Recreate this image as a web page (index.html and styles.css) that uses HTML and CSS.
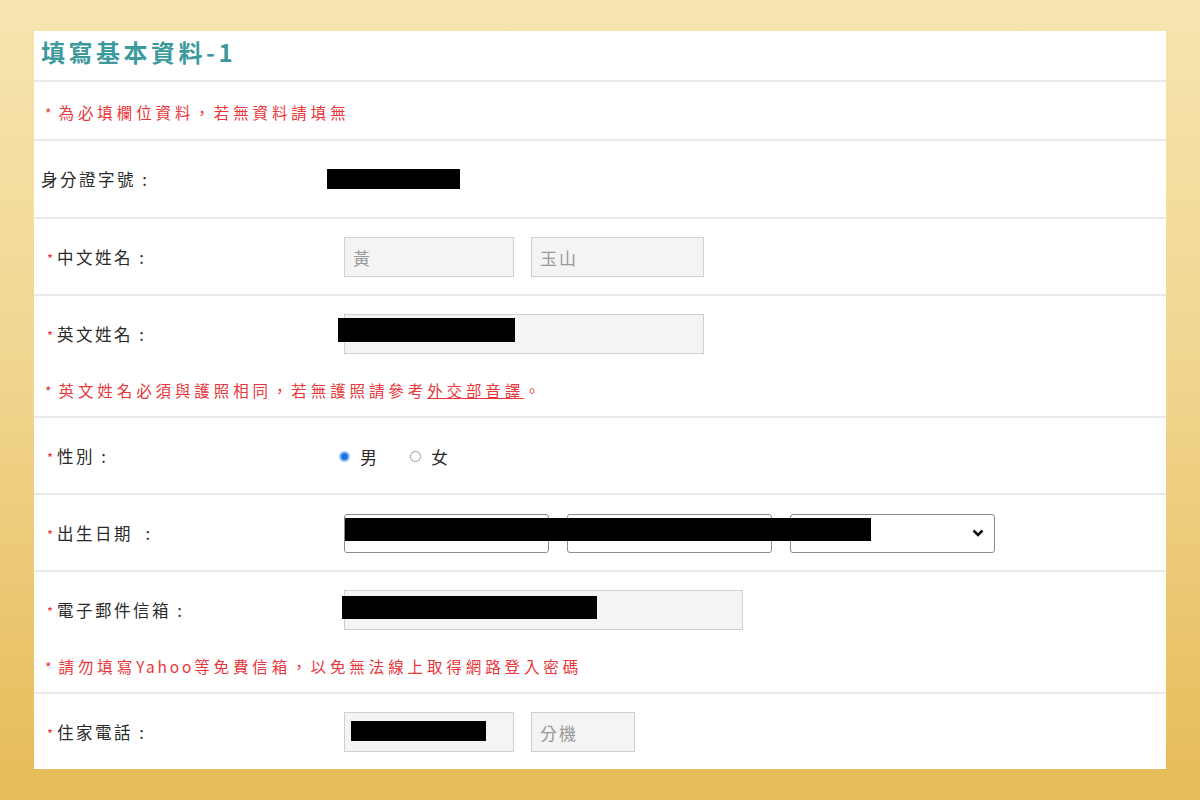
FILE: index.html
```html
<!DOCTYPE html>
<html lang="zh-Hant">

<head>
    <meta charset="UTF-8">
    <meta name="viewport" content="width=device-width, initial-scale=1.0">
    <title>填寫基本資料</title>
    <link rel="stylesheet" href="styles.css">
</head>

<body>
    <div class="panel">
        <h1 class="title">填寫基本資料-1</h1>

        <!-- 提示 -->
        <div class="row row-notice">
            <p class="note"><span class="star">*</span>為必填欄位資料，若無資料請填無</p>
        </div>

        <div class="row row-id">
            <div class="field">
                <label class="label">身分證字號 :</label>
                <div class="value">
                    <span class="mask mask-id"></span>
                </div>
            </div>
        </div>

        <div class="row">
            <div class="field">
                <label class="label"><span class="req">*</span>中文姓名 :</label>
                <div class="value">
                    <input class="input input-short" type="text" value="黃" readonly>
                    <input class="input input-name" type="text" value="玉山" readonly>
                </div>
            </div>
        </div>

        <div class="row">
            <div class="field">
                <label class="label"><span class="req">*</span>英文姓名 :</label>
                <div class="value">
                    <input class="input input-long" type="text" readonly>
                    <span class="mask mask-ename"></span>
                </div>
            </div>
            <p class="note note-field"><span class="star">*</span>英文姓名必須與護照相同，若無護照請參考<a href="#">外交部音譯</a>。</p>
        </div>

        <div class="row">
            <div class="field">
                <label class="label"><span class="req">*</span>性別 :</label>
                <div class="value">
                    <span class="radio checked"></span><span class="radio-text">男</span>
                    <span class="radio"></span><span class="radio-text">女</span>
                </div>
            </div>
        </div>

        <div class="row">
            <div class="field">
                <label class="label"><span class="req">*</span>出生日期&nbsp; :</label>
                <div class="value">
                    <div class="select"></div>
                    <div class="select"></div>
                    <div class="select">
                        <svg class="chevron" width="12" height="8" viewBox="0 0 12 8">
                            <polyline points="1.5,1.5 6,6 10.5,1.5" fill="none" stroke="#111" stroke-width="2.6" />
                        </svg>
                    </div>
                    <span class="mask mask-birth"></span>
                </div>
            </div>
        </div>

        <div class="row">
            <div class="field">
                <label class="label"><span class="req">*</span>電子郵件信箱 :</label>
                <div class="value">
                    <input class="input input-mail" type="text" readonly>
                    <span class="mask mask-mail"></span>
                </div>
            </div>
            <p class="note note-field"><span class="star">*</span>請勿填寫<span class="latin">Yahoo</span>等免費信箱，以免無法線上取得網路登入密碼</p>
        </div>

        <div class="row row-last">
            <div class="field">
                <label class="label"><span class="req">*</span>住家電話 :</label>
                <div class="value">
                    <input class="input input-short" type="text" readonly>
                    <input class="input input-ext" type="text" placeholder="分機" readonly>
                    <span class="mask mask-phone"></span>
                </div>
            </div>
        </div>
    </div>
</body>

</html>
```

FILE: styles.css
```css
html,
body {
    margin: 0;
    padding: 0;
}

body {
    height: 800px;
    box-sizing: border-box;
    padding: 31px 34px 0;
    background: linear-gradient(to bottom, #f6e5b0 0%, #f1d690 45%, #e6bb58 100%);
    font-family: "Noto Sans CJK TC", "Noto Sans", sans-serif;
    color: #333;
}

.panel {
    width: 1132px;
    background-color: #fff;
}

/* 標題 */
.title {
    margin: 0;
    height: 44px;
    padding: 5px 0 0 7px;
    line-height: 32px;
    font-size: 24px;
    font-weight: bold;
    letter-spacing: 3.5px;
    color: #3d9a9c;
    border-bottom: 2px solid #e9e9e9;
}

.row {
    padding: 18px 0 17px 7px;
    border-bottom: 2px solid #e9e9e9;
}

.row-notice {
    padding: 20px 0 17px 11px;
}

.row-id {
    padding-bottom: 18px;
}

.row-last {
    border-bottom: 0;
}

.note {
    margin: 0;
    height: 20px;
    line-height: 20px;
    font-size: 15.5px;
    letter-spacing: 3.9px;
    color: #e8363b;
}

.note .star {
    margin-right: 7px;
    font-size: 14px;
    line-height: 1;
    letter-spacing: 0;
}

.note .latin {
    letter-spacing: 2.8px;
}

.note a {
    color: #e8363b;
    text-decoration: underline;
}

.note-field {
    margin: 26px 0 -1px 4px;
}

.field {
    display: flex;
    align-items: center;
    height: 40px;
}

.label {
    width: 303px;
    flex-shrink: 0;
    font-size: 16.5px;
    letter-spacing: 2.5px;
    color: #2a2a2a;
}

.req {
    display: inline-block;
    margin: 0 4px 0 6px;
    font-size: 13px;
    letter-spacing: 0;
    color: #e8363b;
}

.value {
    position: relative;
    display: flex;
    align-items: center;
    gap: 17px;
    height: 40px;
}

/* 輸入框 */
.input {
    height: 40px;
    box-sizing: border-box;
    margin: 0;
    padding: 0 8px;
    border: 1px solid #d0d0d0;
    background-color: #f4f4f4;
    font-family: "Noto Sans CJK TC", "Noto Sans", sans-serif;
    font-size: 17px;
    letter-spacing: 2px;
    color: #999;
    outline: none;
}

.input::placeholder {
    color: #999;
}

.input-short {
    width: 170px;
}

.input-name {
    width: 173px;
}

.input-long {
    width: 360px;
}

.input-mail {
    width: 399px;
}

.input-ext {
    width: 104px;
}

/* 下拉選單 */
.select {
    width: 205px;
    height: 39px;
    box-sizing: border-box;
    border: 1px solid #8c8c8c;
    border-radius: 3px;
    background-color: #fff;
    display: flex;
    align-items: center;
    justify-content: flex-end;
    padding-right: 10px;
}

.select+.select {
    margin-left: 1px;
}

/* 性別 */
.radio {
    width: 11px;
    height: 11px;
    box-sizing: border-box;
    border: 1px solid #9a9a9a;
    border-radius: 50%;
    background-color: #fff;
    margin-left: -5px;
}

.radio.checked {
    border: 2px solid #9cc4f5;
    background-color: #1a73e8;
}

.radio+.radio-text {
    margin-left: -7px;
}

.radio-text {
    font-size: 17px;
    color: #2a2a2a;
    margin-right: 16px;
}

.radio-text+.radio {
    margin-left: 0;
}

/* 遮蔽區塊 */
.mask {
    position: absolute;
    background-color: #000;
}

.mask-id {
    left: -17px;
    top: 10px;
    width: 133px;
    height: 20px;
}

.mask-ename {
    left: -6px;
    top: 4px;
    width: 177px;
    height: 24px;
}

.mask-birth {
    left: 1px;
    top: 5px;
    width: 526px;
    height: 23px;
}

.mask-mail {
    left: -2px;
    top: 6px;
    width: 255px;
    height: 23px;
}

.mask-phone {
    left: 7px;
    top: 9px;
    width: 135px;
    height: 20px;
}
```
